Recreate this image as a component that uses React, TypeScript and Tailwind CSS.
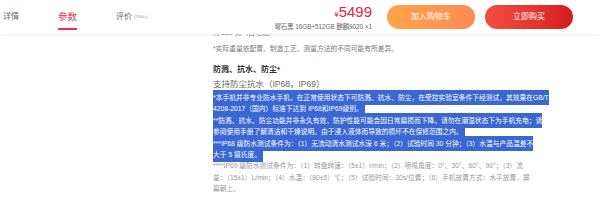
import type { ReactNode } from 'react';

const TABS = [
  { label: '详情', active: false },
  { label: '参数', active: true },
  { label: '评价', active: false, count: '(7900+)' },
];

// Highlighted (selected) text run, background fills the full line box
function Sel({ children }: { children: ReactNode }) {
  return (
    <span className="bg-[#3a67d2] py-[4px] text-white [box-decoration-break:clone]">{children}</span>
  );
}

export default function App() {
  return (
    <div className="h-[206px] w-[600px] overflow-hidden bg-white font-['Liberation_Sans','Noto_Sans_CJK_SC',sans-serif]">
      {/* Sticky purchase bar */}
      <header className="relative z-10 flex h-[34px] items-center justify-between bg-white pl-[3px] pr-[27px] shadow-[0_1px_3px_rgba(0,0,0,0.06)]">
        <nav className="flex h-full items-center gap-[39px]">
          {TABS.map((t) => (
            <a
              key={t.label}
              className={`relative flex h-full items-center whitespace-nowrap ${
                t.active ? 'text-[9.5px] text-[#e3354a]' : 'text-[8px] text-[#666]'
              }`}
            >
              {t.label}
              {t.count && <span className="ml-[2px] text-[4px] text-[#999]">{t.count}</span>}
              {t.active && <span className="absolute bottom-[4px] left-0 h-[2px] w-full bg-[#e3354a]" />}
            </a>
          ))}
        </nav>

        <div className="flex items-center">
          <div className="mr-[15px] flex flex-col items-end">
            <div className="leading-none text-[#e3253e]">
              <span className="text-[8px]">¥</span>
              <span className="text-[15px]">5499</span>
            </div>
            <div className="mt-[4px] whitespace-nowrap text-[6.3px] leading-none text-[#666]">
              曜石黑 16GB+512GB 麒麟9020 ×1
            </div>
          </div>
          <button className="h-[24px] w-[88px] rounded-full bg-gradient-to-r from-[#fea44a] to-[#fe8a52] text-[8px] text-white">
            加入购物车
          </button>
          <button className="ml-[10px] h-[24px] w-[88px] rounded-full bg-gradient-to-r from-[#f44d42] to-[#d51b1c] text-[8px] text-white">
            立即购买
          </button>
        </div>
      </header>

      {/* Spec content */}
      <main className="-mt-[7px] pl-[213px] text-[6.75px] leading-[12px] text-[#777]">
        <p className="whitespace-nowrap">约 219 克（含电池）</p>
        <p className="mt-[4px] whitespace-nowrap">*实际重量依配置、制造工艺、测量方法的不同可能有所差异。</p>

        <h3 className="mt-[9px] text-[8px] font-semibold leading-[12px] text-[#333]">防溅、抗水、防尘*</h3>
        <p className="mt-[2px] text-[8.5px] leading-[12px] text-[#666]">支持防尘抗水（IP68，IP69）</p>

        <div className="mt-[2px] whitespace-nowrap leading-[11.4px]">
          <p>
            <Sel>
              *本手机并非专业防水手机，在正常使用状态下可防溅、抗水、防尘，在受控实验室条件下经测试，其效果在GB/T
              <br />
              4208-2017（国内）标准下达到 IP68和IP69级别。&nbsp;
            </Sel>
          </p>
          <p>
            <Sel>
              **防溅、抗水、防尘功能并非永久有效，防护性能可能会因日常磨损而下降。请勿在潮湿状态下为手机充电；请
              <br />
              参阅使用手册了解清洁和干燥说明。由于浸入液体而导致的损坏不在保修范围之内。&nbsp;
            </Sel>
          </p>
          <p>
            <Sel>
              ***IP68 级防水测试条件为：（1）无流动清水测试水深 6 米；（2）试验时间 30 分钟；（3）水温与产品温差不
              <br />
              大于 5 摄氏度。&nbsp;
            </Sel>
          </p>
          <p className="text-[#999]">
            ****IP69 级防水测试条件为：（1）转盘转速：（5±1）r/min；（2）喷嘴角度：0°、30°、60°、90°；（3）流
            <br />
            量：（15±1）L/min；（4）水温：（80±5）℃；（5）试验时间：30s/位置；（6）手机放置方式：水平放置，屏
            <br />
            幕朝上。
          </p>
        </div>
      </main>
    </div>
  );
}
